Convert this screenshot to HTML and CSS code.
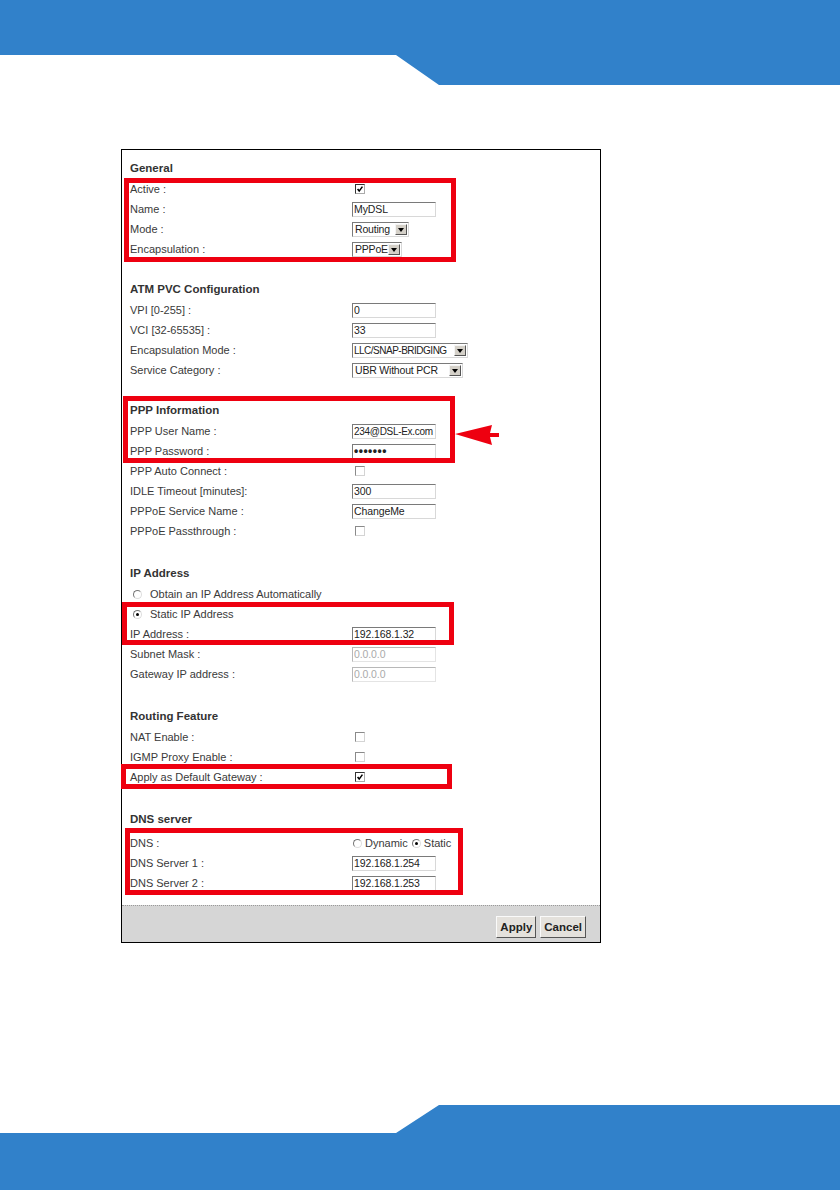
FILE: index.html
```html
<!DOCTYPE html>
<html lang="en">
<head>
  <meta charset="UTF-8">
  <meta name="viewport" content="width=device-width, initial-scale=1.0">
  <title>WAN Setup</title>
  <link rel="stylesheet" href="styles.css">
</head>
<body>

  <header class="band">
    <svg width="840" height="85" viewBox="0 0 840 85"><polygon points="0,0 840,0 840,85 439,85 396,55 0,55" fill="#3181ca"/></svg>
  </header>

  <main class="sheet">
    <form class="panel">

      <section class="section">
        <h3 class="section-title">General</h3>
        <div class="mark mark-general">
          <div class="row"><span class="label">Active :</span><span class="check on"><svg viewBox="0 0 10 10"><path d="M2 5l2 2.6 4-5.6" fill="none" stroke="#000" stroke-width="1.9"/></svg></span></div>
          <div class="row"><span class="label">Name :</span><input class="field" type="text" value="MyDSL"></div>
          <div class="row"><span class="label">Mode :</span><span class="select w-routing"><span class="select-text">Routing</span><span class="select-btn"></span></span></div>
          <div class="row"><span class="label">Encapsulation :</span><span class="select w-pppoe"><span class="select-text">PPPoE</span><span class="select-btn"></span></span></div>
        </div>
      </section>

      <section class="section">
        <h3 class="section-title">ATM PVC Configuration</h3>
        <div class="row"><span class="label">VPI [0-255] :</span><input class="field" type="text" value="0"></div>
        <div class="row"><span class="label">VCI [32-65535] :</span><input class="field" type="text" value="33"></div>
        <div class="row"><span class="label">Encapsulation Mode :</span><span class="select w-llc"><span class="select-text">LLC/SNAP-BRIDGING</span><span class="select-btn"></span></span></div>
        <div class="row"><span class="label">Service Category :</span><span class="select w-ubr"><span class="select-text">UBR Without PCR</span><span class="select-btn"></span></span></div>
      </section>

      <section class="section">
        <div class="mark mark-ppp">
          <h3 class="section-title">PPP Information</h3>
          <div class="row"><span class="label">PPP User Name :</span><input class="field field-tight" type="text" value="234@DSL-Ex.com"></div>
          <div class="row"><span class="label">PPP Password :</span><input class="field" type="password" value="1234567"></div>
          <svg class="pointer" width="45" height="22" viewBox="0 0 45 22"><polygon points="0,10 37,1 35,9 44,9 44,13 35,13 37,21" fill="#ee0010"/></svg>
        </div>
        <div class="row"><span class="label">PPP Auto Connect :</span><span class="check"></span></div>
        <div class="row"><span class="label">IDLE Timeout [minutes]:</span><input class="field" type="text" value="300"></div>
        <div class="row"><span class="label">PPPoE Service Name :</span><input class="field" type="text" value="ChangeMe"></div>
        <div class="row"><span class="label">PPPoE Passthrough :</span><span class="check"></span></div>
      </section>

      <section class="section section-wide">
        <h3 class="section-title">IP Address</h3>
        <div class="row option"><span class="radio"></span><span>Obtain an IP Address Automatically</span></div>
        <div class="mark mark-ip">
          <div class="row option"><span class="radio on"></span><span>Static IP Address</span></div>
          <div class="row"><span class="label">IP Address :</span><input class="field" type="text" value="192.168.1.32"></div>
        </div>
        <div class="row"><span class="label">Subnet Mask :</span><input class="field" type="text" value="0.0.0.0" disabled></div>
        <div class="row"><span class="label">Gateway IP address :</span><input class="field" type="text" value="0.0.0.0" disabled></div>
      </section>

      <section class="section section-wide">
        <h3 class="section-title">Routing Feature</h3>
        <div class="row"><span class="label">NAT Enable :</span><span class="check"></span></div>
        <div class="row"><span class="label">IGMP Proxy Enable :</span><span class="check"></span></div>
        <div class="mark mark-gateway">
          <div class="row"><span class="label">Apply as Default Gateway :</span><span class="check on"><svg viewBox="0 0 10 10"><path d="M2 5l2 2.6 4-5.6" fill="none" stroke="#000" stroke-width="1.9"/></svg></span></div>
        </div>
      </section>

      <section class="section section-wide">
        <h3 class="section-title title-tall">DNS server</h3>
        <div class="mark mark-dns">
          <div class="row">
            <span class="label">DNS :</span>
            <span class="choice"><span class="radio"></span>Dynamic</span>
            <span class="choice"><span class="radio on"></span>Static</span>
          </div>
          <div class="row"><span class="label">DNS Server 1 :</span><input class="field" type="text" value="192.168.1.254"></div>
          <div class="row"><span class="label">DNS Server 2 :</span><input class="field" type="text" value="192.168.1.253"></div>
        </div>
      </section>

      <div class="actions">
        <button type="button" class="btn">Apply</button>
        <button type="button" class="btn">Cancel</button>
      </div>

    </form>
  </main>

  <footer class="band band-bottom">
    <svg width="840" height="85" viewBox="0 0 840 85"><polygon points="0,28 396,28 439,0 840,0 840,85 0,85" fill="#3181ca"/></svg>
  </footer>

</body>
</html>
```

FILE: styles.css
```css
body {
  margin: 0;
  width: 840px;
  min-height: 1190px;
  display: flex;
  flex-direction: column;
  background: #fff;
  font-family: "Liberation Sans", Arial, sans-serif;
  color: #3a3a3a;
}

.band svg {
  display: block;
}

.band-bottom {
  margin-top: auto;
}

.sheet {
  padding: 64px 0 0 121px;
}

.panel {
  width: 480px;
  box-sizing: border-box;
  border: 1px solid #000;
  padding-top: 8px;
  font-size: 11px;
}

.section + .section {
  margin-top: 20px;
}

.section + .section-wide {
  margin-top: 22px;
}

.section-title {
  margin: 0;
  padding-left: 8px;
  height: 21px;
  line-height: 21px;
  font-size: 11.5px;
  font-weight: bold;
  color: #333;
}

.title-tall {
  height: 24px;
}

.row {
  display: flex;
  align-items: center;
  height: 20px;
}

.label {
  width: 230px;
  box-sizing: border-box;
  padding-left: 8px;
  flex: none;
}

.option {
  padding-left: 11px;
}

.option .radio {
  margin-right: 8px;
}

/* form controls */

.field {
  width: 84px;
  height: 15px;
  box-sizing: border-box;
  margin: 0;
  padding: 0 1px;
  border: 1px solid;
  border-color: #7a7a7a #d8d8d8 #d8d8d8 #7a7a7a;
  background: #fff;
  font-family: "Liberation Sans", Arial, sans-serif;
  font-size: 10.5px;
  letter-spacing: -0.1px;
  color: #222;
}

.field-tight {
  font-size: 10px;
  letter-spacing: -0.3px;
}

.field:disabled {
  color: #aaa;
  border-color: #b8b8b8 #e4e4e4 #e4e4e4 #b8b8b8;
  background: #fff;
}

.field[type="password"] {
  font-size: 12px;
  font-weight: bold;
  letter-spacing: 0.5px;
}

.check {
  width: 10px;
  height: 10px;
  box-sizing: border-box;
  margin-left: 3px;
  border: 1px solid;
  border-color: #8a8a8a #d4d4d4 #d4d4d4 #8a8a8a;
  background: #fff;
}

.check.on {
  border-color: #333 #aaa #aaa #333;
}

.check svg {
  display: block;
  width: 8px;
  height: 8px;
}

.radio {
  position: relative;
  width: 9px;
  height: 9px;
  box-sizing: border-box;
  border-radius: 50%;
  border: 1px solid;
  border-color: #777 #ddd #ddd #777;
  background: #fff;
  flex: none;
}

.radio.on::after {
  content: "";
  position: absolute;
  left: 2px;
  top: 2px;
  width: 3px;
  height: 3px;
  border-radius: 50%;
  background: #000;
}

.choice {
  display: flex;
  align-items: center;
  gap: 3px;
  margin-left: 1px;
  margin-right: 3px;
}

.select {
  display: inline-flex;
  align-items: center;
  height: 15px;
  box-sizing: border-box;
  border: 1px solid;
  border-color: #7a7a7a #d8d8d8 #d8d8d8 #7a7a7a;
  background: #fff;
  color: #222;
  font-size: 10.5px;
  letter-spacing: -0.2px;
}

.select-text {
  flex: 1;
  min-width: 0;
  overflow: hidden;
  padding-left: 2px;
  white-space: nowrap;
}

.select-btn {
  position: relative;
  flex: none;
  width: 12px;
  height: 11px;
  margin-right: 1px;
  box-sizing: border-box;
  border: 1px solid;
  border-color: #f4f4f4 #555 #555 #f4f4f4;
  background: #d4d0c8;
}

.select-btn::after {
  content: "";
  position: absolute;
  left: 2px;
  top: 3px;
  border-left: 3.5px solid transparent;
  border-right: 3.5px solid transparent;
  border-top: 4px solid #000;
}

.w-routing { width: 57px; }
.w-pppoe { width: 50px; }
.w-ubr { width: 111px; }

.w-llc {
  width: 116px;
  font-size: 10px;
  letter-spacing: -0.5px;
}

.w-llc .select-text {
  padding-left: 1px;
}

/* red call-out boxes */

.mark {
  position: relative;
}

.mark::after {
  content: "";
  position: absolute;
  box-sizing: border-box;
  border: 5px solid #ee0010;
  pointer-events: none;
}

.mark-general::after { top: -1px; bottom: -3px; left: 2px; width: 332px; }
.mark-ppp::after { top: -4px; bottom: -2px; left: 1px; width: 332px; }
.mark-ip::after { top: -2px; bottom: -1px; left: 0; width: 332px; }
.mark-gateway::after { top: -3px; bottom: -2px; left: -1px; width: 331px; }
.mark-dns::after { top: -5px; bottom: -2px; left: 3px; width: 338px; }

.pointer {
  position: absolute;
  left: 333px;
  top: 24px;
}

/* bottom bar */

.actions {
  margin-top: 12px;
  height: 37px;
  display: flex;
  justify-content: flex-end;
  align-items: flex-start;
  gap: 4px;
  padding: 10px 14px 0 0;
  box-sizing: border-box;
  border-top: 1px dotted #9a9a9a;
  background: #d6d6d6;
}

.btn {
  height: 22px;
  padding: 0 3px;
  border: 1px solid;
  border-color: #fafafa #555 #555 #fafafa;
  background: #e4e1dc;
  font-family: "Liberation Sans", Arial, sans-serif;
  font-size: 11.5px;
  font-weight: bold;
  color: #222;
}
```
